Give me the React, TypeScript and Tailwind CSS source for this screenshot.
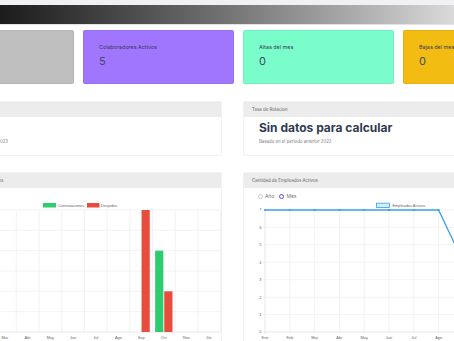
import React from 'react'

const meses = ['Ene', 'Feb', 'Mar', 'Abr', 'May', 'Jun', 'Jul', 'Ago', 'Sep', 'Oct', 'Nov', 'Dic']

const cards = [
  { label: 'Total Colaboradores', value: '5', bg: 'bg-[#bebfbe]' },
  { label: 'Colaboradores Activos', value: '5', bg: 'bg-[#a076fe]' },
  { label: 'Altas del mes', value: '0', bg: 'bg-[#7afccb]' },
  { label: 'Bajas del mes', value: '0', bg: 'bg-[#f3bc12]' }
]

// altas / bajas por mes
const contrataciones = [0, 0, 0, 0, 0, 0, 0, 0, 0, 4, 0, 0]
const despidos = [0, 0, 0, 0, 0, 0, 0, 0, 6, 2, 0, 0]
const activos = [7, 7, 7, 7, 7, 7, 7, 7, 4, 5, 5, 5]

const chartFont = "'Liberation Sans', Arial, sans-serif"

function BarChart() {
  const left = 24.2
  const cat = 22.7
  const top = 22
  const bottom = 144
  const step = (bottom - top) / 6
  return (
    <svg width="299" height="160" className="block" fontFamily={chartFont}>
      {/* leyenda */}
      <rect x="119" y="15" width="13" height="4.5" fill="#2ecc71" />
      <text x="134" y="18.6" fontSize="3.9" fill="#666">Contrataciones</text>
      <rect x="163" y="15" width="12.5" height="4.5" fill="#e74c3c" />
      <text x="177" y="18.6" fontSize="3.9" fill="#666">Despidos</text>
      {[0, 1, 2, 3, 4, 5, 6].map((v) => (
        <g key={v}>
          <line x1={left} x2={left + cat * 12} y1={bottom - v * step} y2={bottom - v * step} stroke={v === 0 ? '#dcdcdc' : '#eeeeee'} strokeWidth="0.7" />
          <text x={left - 4} y={bottom - v * step + 1.4} fontSize="3.9" fill="#666" textAnchor="end">{v}</text>
        </g>
      ))}
      {meses.map((m, i) => (
        <g key={m}>
          <line x1={left + cat * (i + 1)} x2={left + cat * (i + 1)} y1={top} y2={bottom} stroke="#eeeeee" strokeWidth="0.7" />
          <text x={left + cat * i + cat / 2} y={bottom + 7.3} fontSize="3.9" fill="#666" textAnchor="middle">{m}</text>
        </g>
      ))}
      <line x1={left} x2={left} y1={top} y2={bottom} stroke="#dcdcdc" strokeWidth="0.7" />
      {meses.map((m, i) => {
        const c = left + cat * i + cat / 2
        return (
          <g key={m + 'b'}>
            {contrataciones[i] > 0 && (
              <rect x={c - 8.7} y={bottom - contrataciones[i] * step} width="8.2" height={contrataciones[i] * step} fill="#2ecc71" />
            )}
            {despidos[i] > 0 && (
              <rect x={c + 0.4} y={bottom - despidos[i] * step} width="8.2" height={despidos[i] * step} fill="#e74c3c" />
            )}
          </g>
        )
      })}
    </svg>
  )
}

function LineChart() {
  const left = 21
  const stepX = 24.8
  const top = 10
  const bottom = 132
  const stepY = (bottom - top) / 7
  const pts = activos.map((v, i) => [left + stepX * i, bottom - v * stepY])
  return (
    <svg width="299" height="150" className="block" fontFamily={chartFont}>
      <rect x="132.5" y="3.2" width="13" height="4.3" fill="#d7ecfb" stroke="#36a2eb" strokeWidth="0.8" />
      <text x="148.5" y="6.8" fontSize="3.9" fill="#666">Empleados Activos</text>
      {[0, 1, 2, 3, 4, 5, 6, 7].map((v) => (
        <g key={v}>
          <line x1={left - 2} x2={left + stepX * 11} y1={bottom - v * stepY} y2={bottom - v * stepY} stroke={v === 0 ? '#dcdcdc' : '#eeeeee'} strokeWidth="0.7" />
          <text x={left - 3.5} y={bottom - v * stepY + 1.4} fontSize="3.9" fill="#666" textAnchor="end">{v}</text>
        </g>
      ))}
      {meses.map((m, i) => (
        <g key={m}>
          <line x1={left + stepX * i} x2={left + stepX * i} y1={top} y2={bottom + 2} stroke={i === 0 ? '#dcdcdc' : '#eeeeee'} strokeWidth="0.7" />
          <text x={left + stepX * i} y={bottom + 7.3} fontSize="3.9" fill="#666" textAnchor="middle">{m}</text>
        </g>
      ))}
      <polyline points={pts.map((p) => p.join(',')).join(' ')} fill="none" stroke="#36a2eb" strokeWidth="1.3" />
      {pts.map((p, i) => (
        <circle key={i} cx={p[0]} cy={p[1]} r="1.1" fill="#36a2eb" />
      ))}
    </svg>
  )
}

export default function App() {
  return (
    <div className="w-[454px] h-[341px] overflow-hidden bg-white font-['Inter','Liberation_Sans',sans-serif]">
      <div className="h-[5px] bg-[#f0f1f5]" />
      <div className="h-[20px] bg-gradient-to-r from-[#1c1c1c] to-[#dadada] border-b border-[#e3e3e3]" />

      <div className="-ml-[77px] w-[631px]">
        {/* tarjetas */}
        <div className="mt-[5px] flex gap-[9px]">
          {cards.map((c) => (
            <div key={c.label} className={`w-[151px] h-[54px] rounded-[2px] border border-black/5 ${c.bg} pt-[12px] pl-[15px] text-[#363a58]`}>
              <div className="text-[5.4px] leading-[8px]">{c.label}</div>
              <div className="mt-[3px] text-[11px] leading-[14px] text-[#3c4b64]">{c.value}</div>
            </div>
          ))}
        </div>

        {/* indicadores */}
        <div className="mt-[17px] flex gap-[21px]">
          <div className="w-[299px] border border-[#f1f1f1] rounded-[2px] bg-white">
            <div className="h-[15px] bg-[#ececec] pl-[8px] text-[4.4px] leading-[15px] text-[#666]">Antigüedad</div>
            <div className="pl-[15px] pt-[3px] pb-[10px]">
              <div className="text-[12px] leading-[16px] font-bold text-[#2f3b52]">0%</div>
              <div className="mt-[2px] text-[4.35px] leading-[7px] text-[#777]">Basado en el periodo actual 2023</div>
            </div>
          </div>
          <div className="w-[299px] border border-[#f1f1f1] rounded-[2px] bg-white">
            <div className="h-[15px] bg-[#ececec] pl-[8px] text-[4.4px] leading-[15px] text-[#666]">Tasa de Rotacion</div>
            <div className="pl-[15px] pt-[3px] pb-[10px]">
              <div className="text-[12px] leading-[16px] font-bold text-[#2f3b52]">Sin datos para calcular</div>
              <div className="mt-[2px] text-[4.35px] leading-[7px] text-[#777]">Basado en el periodo anterior 2022</div>
            </div>
          </div>
        </div>

        {/* graficas */}
        <div className="mt-[16px] flex gap-[21px]">
          <div className="w-[299px] border border-[#f1f1f1] rounded-[2px] bg-white">
            <div className="h-[15px] bg-[#ececec] pl-[8px] text-[4.4px] leading-[15px] text-[#666]">Contrataciones y Bajas Mensuales</div>
            <BarChart />
          </div>
          <div className="w-[299px] border border-[#f1f1f1] rounded-[2px] bg-white">
            <div className="h-[15px] bg-[#ececec] pl-[8px] text-[4.4px] leading-[15px] text-[#666]">Cantidad de Empleados Activos</div>
            <div className="mt-[4px] pl-[14px] flex items-center gap-[5px] text-[5px] leading-[8px] text-[#777]">
              <label className="flex items-center gap-[2px]">
                <span className="w-[5px] h-[5px] rounded-full border border-[#ccc] bg-white" />
                Año
              </label>
              <label className="flex items-center gap-[2px]">
                <span className="w-[5px] h-[5px] rounded-full border-[1.5px] border-[#5b4bf5] bg-white" />
                Mes
              </label>
            </div>
            <LineChart />
          </div>
        </div>
      </div>
    </div>
  )
}
